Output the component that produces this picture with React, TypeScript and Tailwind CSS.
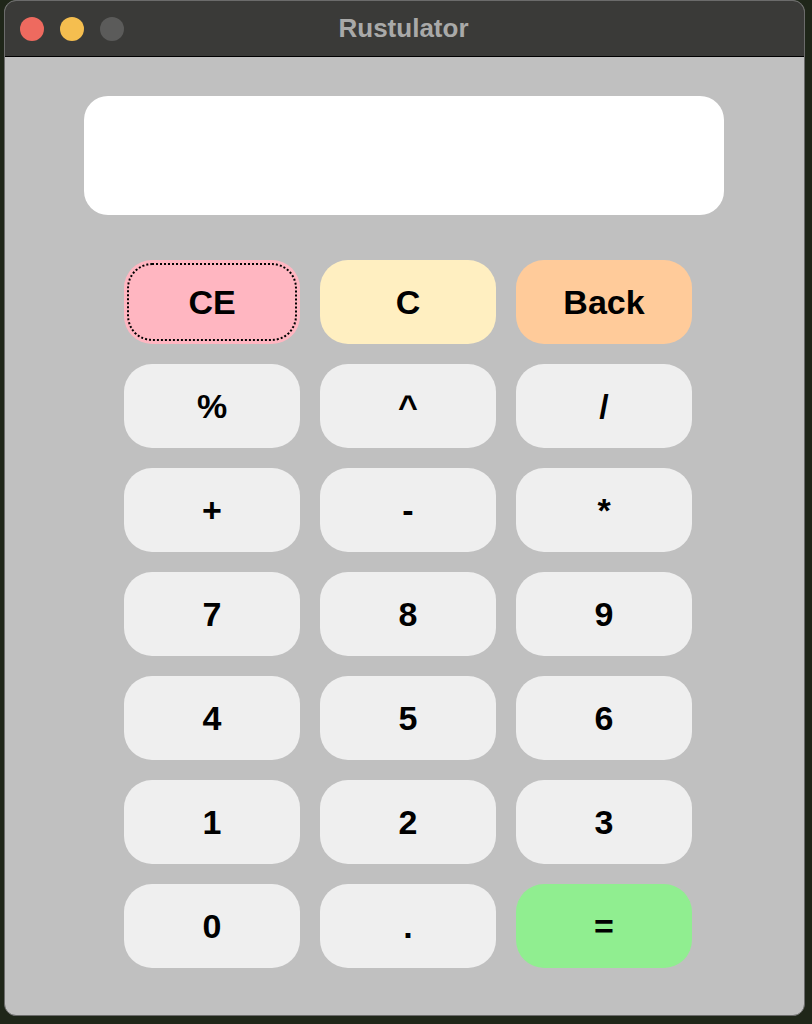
import React from "react";

type Btn = { label: string; bg: string; focus?: boolean };

const rows: Btn[][] = [
  [
    { label: "CE", bg: "bg-[#ffb6c1]", focus: true },
    { label: "C", bg: "bg-[#ffefc1]" },
    { label: "Back", bg: "bg-[#ffcb9a]" },
  ],
  [
    { label: "%", bg: "bg-[#efefef]" },
    { label: "^", bg: "bg-[#efefef]" },
    { label: "/", bg: "bg-[#efefef]" },
  ],
  [
    { label: "+", bg: "bg-[#efefef]" },
    { label: "-", bg: "bg-[#efefef]" },
    { label: "*", bg: "bg-[#efefef]" },
  ],
  [
    { label: "7", bg: "bg-[#efefef]" },
    { label: "8", bg: "bg-[#efefef]" },
    { label: "9", bg: "bg-[#efefef]" },
  ],
  [
    { label: "4", bg: "bg-[#efefef]" },
    { label: "5", bg: "bg-[#efefef]" },
    { label: "6", bg: "bg-[#efefef]" },
  ],
  [
    { label: "1", bg: "bg-[#efefef]" },
    { label: "2", bg: "bg-[#efefef]" },
    { label: "3", bg: "bg-[#efefef]" },
  ],
  [
    { label: "0", bg: "bg-[#efefef]" },
    { label: ".", bg: "bg-[#efefef]" },
    { label: "=", bg: "bg-[#90ee90]" },
  ],
];

export default function App() {
  return (
    <div
      className="w-[812px] h-[1024px] bg-[#1f2619] pl-[4px] overflow-hidden"
      style={{ fontFamily: '"Liberation Sans", Arial, sans-serif' }}
    >
      <div className="w-[801px] h-[1016px] rounded-[12px] overflow-hidden border border-[#6b6b6b] flex flex-col bg-[#c0c0c0]">
        <div className="h-[56px] shrink-0 bg-[#3a3a38] border-b border-black flex items-center relative">
          <div className="flex items-center gap-[16px] pl-[15px]">
            <div className="w-[24px] h-[24px] rounded-full bg-[#ee6a5f]" />
            <div className="w-[24px] h-[24px] rounded-full bg-[#f5be4f]" />
            <div className="w-[24px] h-[24px] rounded-full bg-[#5b5b5a]" />
          </div>
          <div className="absolute inset-0 flex items-center justify-center pr-[2px] pb-[2px]">
            <span className="text-[26px] font-bold text-[#a9a9a8] leading-none">Rustulator</span>
          </div>
        </div>
        <div className="flex-1 flex flex-col pt-[39px]">
          <div className="ml-[79px] w-[640px] h-[119px] bg-white rounded-[24px]" />
          <div className="mt-[45px] ml-[119px] grid grid-cols-[176px_176px_176px] gap-[20px]">
            {rows.flat().map((b, i) => (
              <div
                key={i}
                className={`h-[84px] rounded-[28px] ${b.bg} flex items-center justify-center text-[34px] font-bold text-black relative`}
              >
                {b.focus && (
                  <div className="absolute inset-[3px] rounded-[25px] border-2 border-dotted border-black" />
                )}
                <span className="leading-none">{b.label}</span>
              </div>
            ))}
          </div>
        </div>
      </div>
    </div>
  );
}
